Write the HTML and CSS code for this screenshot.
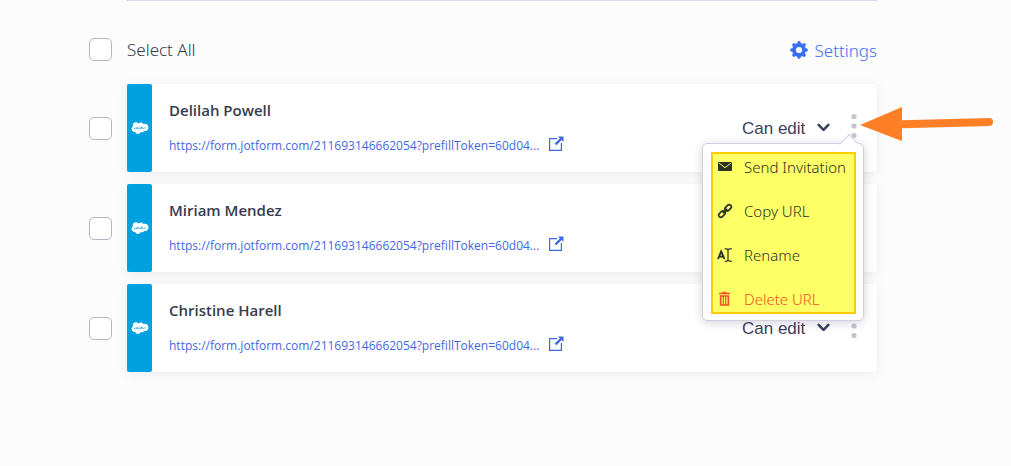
FILE: index.html
```html
<!DOCTYPE html>
<html lang="en">
<head>
<meta charset="utf-8">
<meta name="viewport" content="width=device-width, initial-scale=1">
<title>Prefilled URLs</title>
<link rel="stylesheet" href="styles.css">
</head>
<body>
<svg class="defs" width="0" height="0" aria-hidden="true">
  <symbol id="cloud" viewBox="0 0 18 13">
    <path fill="#fff" d="M7.500 1.600C8.200.9 9 .6 9.900.6c1.100 0 2 .6 2.500 1.500.5-.2 1-.3 1.500-.3 2 0 3.600 1.600 3.600 3.600s-1.600 3.700-3.600 3.700c-.3 0-.5 0-.7-.1-.5.800-1.300 1.300-2.300 1.300-.4 0-.8-.1-1.200-.3-.4 1.100-1.500 1.900-2.700 1.900-1.300 0-2.400-.8-2.800-2-.2 0-.4.1-.6.1C1.900 10 .6 8.600.6 7c0-1.100.6-2 1.400-2.500-.2-.4-.3-.8-.3-1.300C1.700 1.500 3.100.2 4.800.2c1.100 0 2.100.6 2.700 1.400z"/>
    <path stroke="#35a9dd" stroke-width=".9" fill="none" d="M3 6.600h1.200l.5-.7 1 .9.600-1.700v1.600l1.100-.9.800.9 1-.9.600.9.600-2 .5 1.800 1-.8.800.9.800-.8 1 .7"/>
  </symbol>
  <symbol id="open" viewBox="0 0 16 16">
    <path fill="none" stroke="currentColor" stroke-width="1.200" d="M9 2.600H1.600v11.800h11.800V7"/>
    <path fill="currentColor" d="M10 .5h5.500V6l-1.900-1.900-5.200 5.200-1.700-1.700 5.200-5.200z"/>
  </symbol>
  <symbol id="chevron" viewBox="0 0 12 8">
    <path fill="none" stroke="currentColor" stroke-width="2.300" stroke-linecap="round" stroke-linejoin="round" d="M1.500 1.500L6 6.200l4.500-4.700"/>
  </symbol>
  <symbol id="dots" viewBox="0 0 6 26">
    <g fill="currentColor"><circle cx="3" cy="3.500" r="2.600"/><circle cx="3" cy="13" r="2.600"/><circle cx="3" cy="22.500" r="2.600"/></g>
  </symbol>
</svg>

<main class="page">
  <hr class="divider">

  <div class="toolbar">
    <input class="check" type="checkbox" id="all">
    <label class="select-all" for="all">Select All</label>
    <button class="settings" type="button">
      <svg width="18" height="18" viewBox="0 0 18 18" aria-hidden="true">
        <circle cx="9" cy="9" r="5" fill="none" stroke="currentColor" stroke-width="3.800"/>
        <g stroke="currentColor" stroke-width="3.600" stroke-linecap="round">
          <path d="M9 1.900v1M9 15.100v1M1.900 9h1M15.100 9h1M4 4l.6.6M13.400 13.400l.6.6M4 14l.6-.6M13.400 4.600l.6-.6"/>
        </g>
      </svg>
      Settings
    </button>
  </div>

  <ul class="list">
    <li class="row">
      <input class="check" type="checkbox" aria-label="Select Delilah Powell">
      <article class="card">
        <div class="brand"><svg width="18" height="13" aria-hidden="true"><use href="#cloud"/></svg></div>
        <div class="info">
          <h2 class="name">Delilah Powell</h2>
          <a class="url" href="#"><span class="url-text">https://form.jotform.com/211693146662054?prefillToken=60d04...</span><svg class="open" width="16" height="16" aria-hidden="true"><use href="#open"/></svg></a>
        </div>
        <div class="access">
          <select class="role" aria-label="Access for Delilah Powell"><option>Can edit</option><option>Can view</option></select>
          <svg class="chevron" width="13" height="9" aria-hidden="true"><use href="#chevron"/></svg>
        </div>
        <div class="more-wrap">
          <button class="more" type="button" aria-label="More actions"><svg width="6" height="26" aria-hidden="true"><use href="#dots"/></svg></button>
          <div class="menu">
            <div class="actions">
              <button class="action" type="button">
                <svg width="16" height="16" viewBox="0 0 16 16" aria-hidden="true"><rect x="1" y="3" width="14" height="9" rx="1" fill="currentColor"/><path d="M2 4L8 8.700 14 4" fill="none" stroke="#ffff66" stroke-width="1"/></svg>
                Send Invitation
              </button>
              <button class="action" type="button">
                <svg width="16" height="16" viewBox="0 0 16 16" aria-hidden="true"><g transform="rotate(-45 8 8)" fill="none" stroke="currentColor" stroke-width="1.700"><rect x="0" y="5.800" width="7.200" height="4.400" rx="2.200"/><rect x="8.800" y="5.800" width="7.200" height="4.400" rx="2.200"/><path d="M5 8h6"/></g></svg>
                Copy URL
              </button>
              <button class="action" type="button">
                <svg width="16" height="16" viewBox="0 0 16 16" aria-hidden="true"><path d="M1 12L4.200 4.400 7.400 12M2.200 9.600h4" fill="none" stroke="currentColor" stroke-width="1.900"/><path d="M7.800 1.700c1.900 0 3 .4 3.200 1.400.2-1 1.400-1.400 3.800-1.400M11 3v10M7.800 14.300c1.900 0 3-.4 3.200-1.400.2 1 1.400 1.400 3.800 1.400" fill="none" stroke="currentColor" stroke-width="1.200"/></svg>
                Rename
              </button>
              <button class="action danger" type="button">
                <svg width="16" height="16" viewBox="0 0 16 16" aria-hidden="true"><path fill="currentColor" fill-rule="evenodd" d="M5.500 .8h4v1h3.500v1.500H2V1.800h3.500zM2.800 4.200h9.400v10.600H2.800zM4.500 5.800v7.400h1.200V5.800zm2.400 0v7.400h1.200V5.800zm2.400 0v7.400h1.200V5.800z"/></svg>
                Delete URL
              </button>
            </div>
          </div>
        </div>
      </article>
    </li>

    <li class="row">
      <input class="check" type="checkbox" aria-label="Select Miriam Mendez">
      <article class="card">
        <div class="brand"><svg width="18" height="13" aria-hidden="true"><use href="#cloud"/></svg></div>
        <div class="info">
          <h2 class="name">Miriam Mendez</h2>
          <a class="url" href="#"><span class="url-text">https://form.jotform.com/211693146662054?prefillToken=60d04...</span><svg class="open" width="16" height="16" aria-hidden="true"><use href="#open"/></svg></a>
        </div>
      </article>
    </li>

    <li class="row">
      <input class="check" type="checkbox" aria-label="Select Christine Harell">
      <article class="card">
        <div class="brand"><svg width="18" height="13" aria-hidden="true"><use href="#cloud"/></svg></div>
        <div class="info">
          <h2 class="name">Christine Harell</h2>
          <a class="url" href="#"><span class="url-text">https://form.jotform.com/211693146662054?prefillToken=60d04...</span><svg class="open" width="16" height="16" aria-hidden="true"><use href="#open"/></svg></a>
        </div>
        <div class="access">
          <select class="role" aria-label="Access for Christine Harell"><option>Can edit</option><option>Can view</option></select>
          <svg class="chevron" width="13" height="9" aria-hidden="true"><use href="#chevron"/></svg>
        </div>
        <div class="more-wrap">
          <button class="more" type="button" aria-label="More actions"><svg width="6" height="26" aria-hidden="true"><use href="#dots"/></svg></button>
        </div>
      </article>
    </li>
  </ul>
</main>

<svg class="pointer" width="136" height="36" viewBox="0 0 136 36" aria-hidden="true">
  <path fill="#ff7f27" d="M1 19L43 1v13.200L130 12q4 0 4 4t-4 4L43 22.200V35z"/>
</svg>
</body>
</html>
```
FILE: styles.css
```css
* { box-sizing: border-box; }

body {
  margin: 0;
  position: relative;
  background: #fcfcfc;
  color: #2c3345;
  font-family: "Open Sans", "Noto Sans", sans-serif;
}

.defs { position: absolute; }

button {
  padding: 0;
  border: 0;
  background: none;
  color: inherit;
  font: inherit;
  cursor: pointer;
}

.page { padding: 0 134px 40px 89px; }

.divider {
  height: 1px;
  margin: 0 0 0 38px;
  border: 0;
  background: #d8d8e8;
}

.toolbar {
  display: flex;
  align-items: center;
  height: 48px;
  margin: 24px 0 11px;
}

.check {
  flex: none;
  appearance: none;
  width: 23px;
  height: 23px;
  margin: 0 15px 0 0;
  border: 1px solid #b4b4c4;
  border-radius: 5px;
  background: #fff;
}

.check:checked { background: #4277ff; }

.select-all {
  color: #343b4e;
  font-family: "Noto Sans", sans-serif;
  font-size: 17px;
  font-weight: 300;
}

.settings {
  display: flex;
  align-items: center;
  gap: 7px;
  margin-left: auto;
  padding-top: 2px;
  color: #3a6ff5;
  font-family: "Noto Sans", sans-serif;
  font-size: 17px;
  font-weight: 300;
}

.list {
  display: grid;
  gap: 12px;
  margin: 0;
  padding: 0;
  list-style: none;
}

.row { display: flex; align-items: center; }

.card {
  flex: 1;
  display: flex;
  align-items: center;
  min-width: 0;
  min-height: 88px;
  border-radius: 3px;
  background: #fff;
  box-shadow: 0 2px 12px rgba(0, 0, 0, .07);
}

.brand {
  flex: none;
  align-self: stretch;
  display: grid;
  place-items: center;
  width: 25px;
  border-radius: 2px;
  background: #00a1e0;
}

.info { flex: 1; min-width: 0; padding-left: 17px; }

.name {
  margin: 0 0 16px;
  color: #343b4e;
  font-size: 15px;
  font-weight: 600;
  line-height: 20px;
}

.url {
  display: flex;
  align-items: center;
  gap: 9px;
  color: #3f69e4;
  font-size: 12px;
  font-weight: 500;
  line-height: 20px;
  text-decoration: none;
}

.open { flex: none; margin-bottom: 4px; }

.url-text { overflow: hidden; text-overflow: ellipsis; white-space: nowrap; }

.access { position: relative; }

.role {
  appearance: none;
  width: 88px;
  padding: 0;
  border: 0;
  background: none;
  color: #3b4259;
  font: 17px "Liberation Sans", Arial, sans-serif;
}

.chevron {
  position: absolute;
  top: 6px;
  right: 0;
  color: #3b4259;
  pointer-events: none;
}

.more-wrap { position: relative; margin: 0 20px 4px 21px; }

.more { display: block; color: #c3c3d1; }
.more svg { display: block; }

.menu {
  position: absolute;
  z-index: 2;
  top: 30px;
  right: -7px;
  width: 162px;
  padding: 8px 7px 6px 8px;
  border: 1px solid #d0d0e2;
  border-radius: 5px;
  background: #fff;
  box-shadow: 0 2px 10px rgba(40, 40, 90, .2);
}

.menu::before {
  content: "";
  position: absolute;
  top: -7px;
  right: 7px;
  width: 13px;
  height: 13px;
  border: 1px solid #d0d0e2;
  border-width: 1px 0 0 1px;
  background: #fff;
  transform: rotate(45deg);
}

.actions {
  position: relative;
  display: grid;
  gap: 20px;
  padding: 1px 4px;
  border: 2px solid #fc0;
  background: #ffff66;
}

.action {
  display: flex;
  align-items: center;
  gap: 11px;
  height: 24px;
  color: #2c3324;
  font-family: "Noto Sans", sans-serif;
  font-size: 15px;
  font-weight: 300;
  white-space: nowrap;
}

.danger { color: #f5502a; }

.pointer {
  position: absolute;
  z-index: 3;
  top: 106px;
  right: 16px;
}
```
